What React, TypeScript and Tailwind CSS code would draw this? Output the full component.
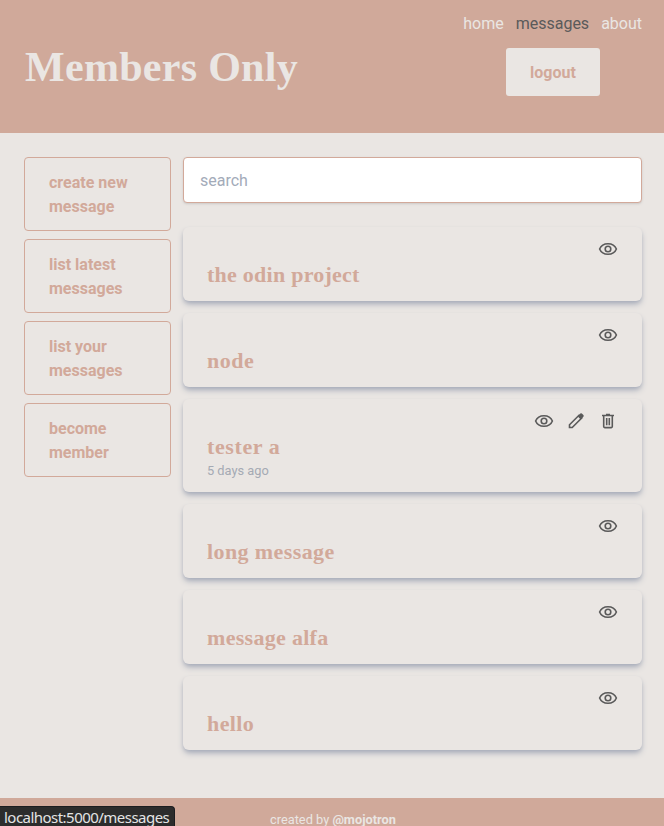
import React from "react";

type Message = { title: string; date?: string; own?: boolean };

const messages: Message[] = [
  { title: "the odin project" },
  { title: "node" },
  { title: "tester a", date: "5 days ago", own: true },
  { title: "long message" },
  { title: "message alfa" },
  { title: "hello" },
];

const actions = ["create new message", "list latest messages", "list your messages", "become member"];

const titleSpacing: Record<string, string> = {
  "the odin project": "tracking-[0.25px]",
  node: "tracking-[0.5px]",
  "tester a": "tracking-[0.6px]",
  "long message": "tracking-[0.4px]",
  "message alfa": "tracking-[0.3px]",
  hello: "tracking-[0.4px]",
};

function EyeIcon() {
  return (
    <svg className="size-5" viewBox="0 0 20 20" fill="none" stroke="currentColor" strokeWidth="1.6">
      <path d="M1.6 10C3 6.6 6.2 4.7 10 4.7s7 1.9 8.4 5.3c-1.4 3.4-4.6 5.3-8.400 5.300S3 13.400 1.600 10Z" />
      <circle cx="10" cy="10" r="2.800" />
    </svg>
  );
}

function PencilIcon() {
  return (
    <svg className="size-5" viewBox="0 0 20 20" fill="none" stroke="currentColor" strokeWidth="1.6">
      <path d="M3.500 16.500v-2.700l9.500-9.500 2.700 2.700-9.500 9.500Z" />
      <path d="m11.600 5.300 2.700-2.700q.800-.700 1.600 0l1.500 1.500q.700.800 0 1.600l-2.700 2.700Z" fill="currentColor" stroke="none" />
    </svg>
  );
}

function TrashIcon() {
  return (
    <svg className="size-5" viewBox="0 0 20 20" fill="none" stroke="currentColor" strokeWidth="1.6">
      <path d="M4 4.500h12M8 3.600h4M5.700 5v10.600q0 1 1 1h6.600q1 0 1-1V5" />
      <path d="M8.700 7v7.300M11.300 7v7.300" />
    </svg>
  );
}

export default function App() {
  return (
    <div className="relative flex h-[826px] flex-col overflow-hidden bg-[#eae6e3] font-[Roboto,sans-serif] text-base text-[#d2a99a]">
      <header className="flex h-[133px] shrink-0 justify-between bg-[#d0a99a] pl-[25px] pr-[22px] text-[#eae6e3]">
        <h1 className="pt-[37px] font-['Liberation_Serif',serif] text-[42px] leading-[60px] font-bold tracking-[0.3px] whitespace-nowrap">
          Members Only
        </h1>
        <div className="flex flex-col items-end pt-3">
          <nav className="flex gap-3 leading-6">
            <a>home</a>
            <a className="text-[#5a5a5a]">messages</a>
            <a>about</a>
          </nav>
          <button className="mt-3 mr-[42px] h-12 w-[94px] rounded-[3px] bg-[#eae6e3] pt-px font-bold text-[#d2a99a]">
            logout
          </button>
        </div>
      </header>

      <main className="flex h-[665px] shrink-0 gap-3 pt-6 pr-[22px] pl-6">
        <aside className="flex w-[147px] shrink-0 flex-col gap-2">
          {actions.map((label) => (
            <button key={label} className="h-[74px] rounded border border-[#d2a99a] px-6 pt-0.5 text-left leading-6 font-bold">
              {label}
            </button>
          ))}
        </aside>
        <section className="flex flex-1 flex-col">
          <input
            placeholder="search"
            className="h-[46px] rounded border border-[#d2a99a] bg-white px-4 shadow-sm placeholder:text-[#a3abb9]"
          />
          <ul className="mt-6 flex flex-col gap-3">
            {messages.map((m) => (
              <li
                key={m.title}
                className={`${m.date ? "h-[93px]" : "h-[74px]"} rounded-md bg-[#eae6e3] px-6 pt-3 shadow-[0_4px_6px_-1px_#a8adba,0_2px_4px_-2px_#a8adba]`}
              >
                <div className="flex h-5 justify-end gap-3 text-[#5a5a5a]">
                  <EyeIcon />
                  {m.own && <PencilIcon />}
                  {m.own && <TrashIcon />}
                </div>
                <h2 className={`${titleSpacing[m.title]} font-['Liberation_Serif',serif] text-[22px] leading-8 font-bold`}>
                  {m.title}
                </h2>
                {m.date && <p className="text-[12.8px] leading-[15px] text-[#a5aab4]">{m.date}</p>}
              </li>
            ))}
          </ul>
        </section>
      </main>

      <footer className="h-7 shrink-0 bg-[#d0a99a] pt-[13px] pl-[270px] text-[12.8px] leading-[18px] text-[#eae6e3]">
        created by <b>@mojotron</b>
      </footer>
      <div className="absolute bottom-0 left-0 h-5 w-[175px] rounded-tr border-t border-r border-[#1b1d20] bg-[#2c2c2c] pl-1 font-['Noto_Sans',sans-serif] text-[15px] leading-[21px] tracking-[-0.53px] whitespace-nowrap text-[#e4e4e4]">
        localhost:5000/messages
      </div>
    </div>
  );
}
